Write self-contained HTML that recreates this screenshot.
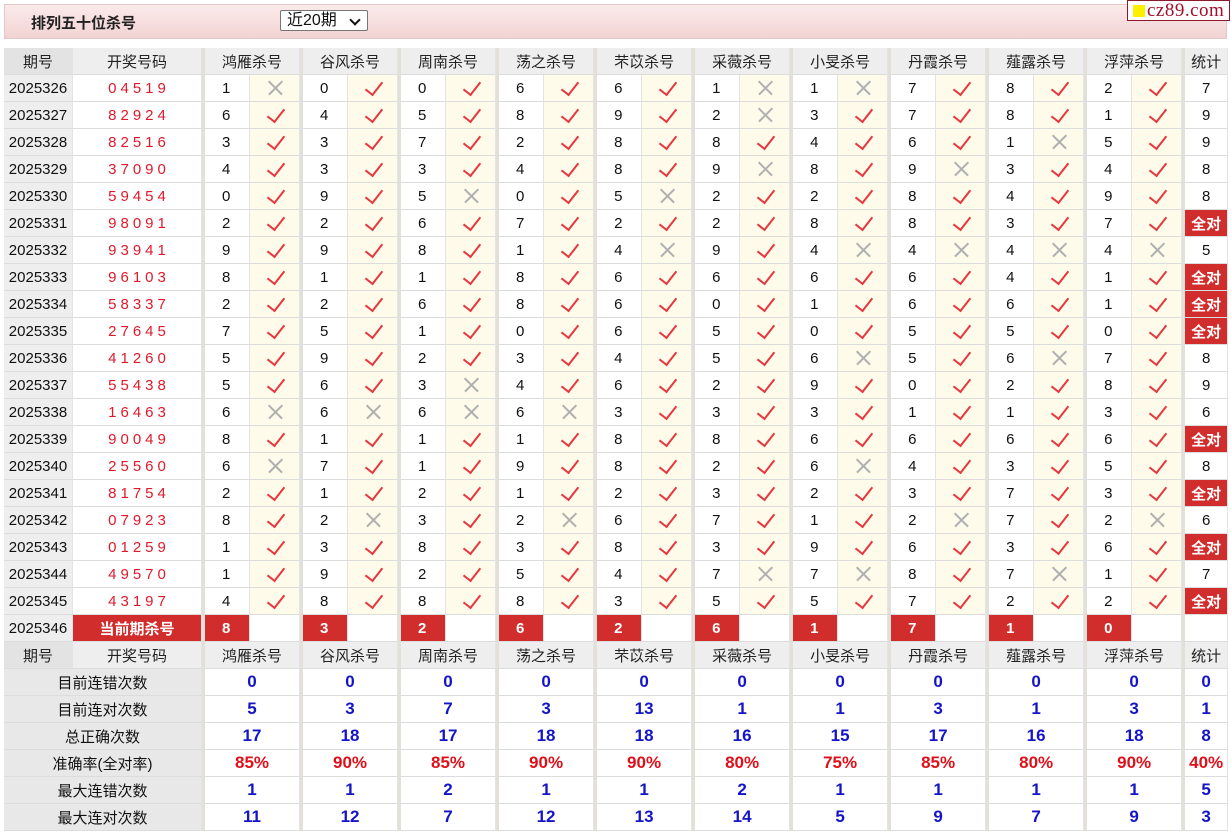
<!DOCTYPE html>
<html><head><meta charset="utf-8"><style>
body{margin:0;background:#fff;font-family:"Liberation Sans","Noto Sans CJK SC",sans-serif;width:1231px;height:833px;overflow:hidden;position:relative}
.top{position:absolute;left:4px;top:4px;width:1223px;height:35px;background:linear-gradient(#fbeaea,#f2d3d3);border:1px solid #e3c8c8;box-sizing:border-box}
.tt{position:absolute;left:26px;top:7px;font-weight:bold;font-size:15px;color:#222}
.sel{position:absolute;left:275px;top:5px;width:88px;height:21px;border:1px solid #767676;border-radius:2px;background:#fff;font-size:16px;line-height:20px;padding-left:6px;box-sizing:border-box;color:#111}
.sel i{position:absolute;right:8px;top:5px;width:6px;height:6px;border-right:2px solid #111;border-bottom:2px solid #111;transform:rotate(45deg)}
.logo{position:absolute;left:1127px;top:0;width:103px;height:21px;background:#fff;border:1px solid #8b1a2a;box-sizing:border-box;font-family:"Liberation Serif",serif;color:#a0102a;font-size:19px;line-height:19px;padding-left:19px;letter-spacing:0.5px}
.logo b{position:absolute;left:5px;top:4px;width:12px;height:12px;background:#ffef00}
table{position:absolute;left:4px;top:48px;border-collapse:separate;border-spacing:0;table-layout:fixed;width:1223px}
td{height:27px;border-bottom:1px solid #dcdcdc;border-right:1px solid #e4e4e4;text-align:center;font-size:15px;padding:0;box-sizing:border-box;color:#111;position:relative;white-space:nowrap;overflow:hidden}
tr.h td{background:#eeeeee;color:#222}
td.q{background:#eeeeee}
tr.h td.q{background:#e3e3e3}
td.k{color:#e0192b;letter-spacing:4px;padding-left:4px}
td.n{border-left:3px solid #e3e0d8;text-align:left;padding-left:17px}
td.g{border-left:3px solid #e3e0d8}
td.m{background:#fffbeb}
td.v::after{content:"";position:absolute;left:21px;top:3px;width:8px;height:15px;border-right:2px solid #e5383e;border-bottom:2px solid #e5383e;transform:rotate(38deg)}
td.x::before,td.x::after{content:"";position:absolute;left:16px;top:12px;width:19px;height:1.5px;background:#b0b0b0;transform:rotate(45deg)}
td.x::after{transform:rotate(-45deg)}
td.a{background:#d12d2d;color:#fff;font-weight:bold}
td.r{background:#d12d2d;color:#fff;font-weight:bold}
td.c{background:#fff}
td.l{background:#e8e8e8}
td.b{color:#1515c8;font-weight:bold;font-size:17px}
td.p{color:#e0101a;font-weight:bold;font-size:17px}
td.s{border-left:3px solid #e3e0d8}
</style></head><body>
<div class="top"><div class="tt">排列五十位杀号</div><div class="sel">近20期<i></i></div></div>
<div class="logo"><b></b>cz89.com</div>
<table>
<colgroup><col style="width:69px"><col style="width:129px"><col style="width:48px"><col style="width:50px"><col style="width:48px"><col style="width:50px"><col style="width:48px"><col style="width:50px"><col style="width:48px"><col style="width:50px"><col style="width:48px"><col style="width:50px"><col style="width:48px"><col style="width:50px"><col style="width:48px"><col style="width:50px"><col style="width:48px"><col style="width:50px"><col style="width:48px"><col style="width:50px"><col style="width:48px"><col style="width:50px"><col style="width:46px"></colgroup>
<tr class="h"><td class="q">期号</td><td>开奖号码</td><td class="g" colspan="2">鸿雁杀号</td><td class="g" colspan="2">谷风杀号</td><td class="g" colspan="2">周南杀号</td><td class="g" colspan="2">荡之杀号</td><td class="g" colspan="2">芣苡杀号</td><td class="g" colspan="2">采薇杀号</td><td class="g" colspan="2">小旻杀号</td><td class="g" colspan="2">丹霞杀号</td><td class="g" colspan="2">薤露杀号</td><td class="g" colspan="2">浮萍杀号</td><td class="g">统计</td></tr>
<tr><td class="q">2025326</td><td class="k">04519</td><td class="n">1</td><td class="m x"></td><td class="n">0</td><td class="m v"></td><td class="n">0</td><td class="m v"></td><td class="n">6</td><td class="m v"></td><td class="n">6</td><td class="m v"></td><td class="n">1</td><td class="m x"></td><td class="n">1</td><td class="m x"></td><td class="n">7</td><td class="m v"></td><td class="n">8</td><td class="m v"></td><td class="n">2</td><td class="m v"></td><td class="s">7</td></tr>
<tr><td class="q">2025327</td><td class="k">82924</td><td class="n">6</td><td class="m v"></td><td class="n">4</td><td class="m v"></td><td class="n">5</td><td class="m v"></td><td class="n">8</td><td class="m v"></td><td class="n">9</td><td class="m v"></td><td class="n">2</td><td class="m x"></td><td class="n">3</td><td class="m v"></td><td class="n">7</td><td class="m v"></td><td class="n">8</td><td class="m v"></td><td class="n">1</td><td class="m v"></td><td class="s">9</td></tr>
<tr><td class="q">2025328</td><td class="k">82516</td><td class="n">3</td><td class="m v"></td><td class="n">3</td><td class="m v"></td><td class="n">7</td><td class="m v"></td><td class="n">2</td><td class="m v"></td><td class="n">8</td><td class="m v"></td><td class="n">8</td><td class="m v"></td><td class="n">4</td><td class="m v"></td><td class="n">6</td><td class="m v"></td><td class="n">1</td><td class="m x"></td><td class="n">5</td><td class="m v"></td><td class="s">9</td></tr>
<tr><td class="q">2025329</td><td class="k">37090</td><td class="n">4</td><td class="m v"></td><td class="n">3</td><td class="m v"></td><td class="n">3</td><td class="m v"></td><td class="n">4</td><td class="m v"></td><td class="n">8</td><td class="m v"></td><td class="n">9</td><td class="m x"></td><td class="n">8</td><td class="m v"></td><td class="n">9</td><td class="m x"></td><td class="n">3</td><td class="m v"></td><td class="n">4</td><td class="m v"></td><td class="s">8</td></tr>
<tr><td class="q">2025330</td><td class="k">59454</td><td class="n">0</td><td class="m v"></td><td class="n">9</td><td class="m v"></td><td class="n">5</td><td class="m x"></td><td class="n">0</td><td class="m v"></td><td class="n">5</td><td class="m x"></td><td class="n">2</td><td class="m v"></td><td class="n">2</td><td class="m v"></td><td class="n">8</td><td class="m v"></td><td class="n">4</td><td class="m v"></td><td class="n">9</td><td class="m v"></td><td class="s">8</td></tr>
<tr><td class="q">2025331</td><td class="k">98091</td><td class="n">2</td><td class="m v"></td><td class="n">2</td><td class="m v"></td><td class="n">6</td><td class="m v"></td><td class="n">7</td><td class="m v"></td><td class="n">2</td><td class="m v"></td><td class="n">2</td><td class="m v"></td><td class="n">8</td><td class="m v"></td><td class="n">8</td><td class="m v"></td><td class="n">3</td><td class="m v"></td><td class="n">7</td><td class="m v"></td><td class="s a">全对</td></tr>
<tr><td class="q">2025332</td><td class="k">93941</td><td class="n">9</td><td class="m v"></td><td class="n">9</td><td class="m v"></td><td class="n">8</td><td class="m v"></td><td class="n">1</td><td class="m v"></td><td class="n">4</td><td class="m x"></td><td class="n">9</td><td class="m v"></td><td class="n">4</td><td class="m x"></td><td class="n">4</td><td class="m x"></td><td class="n">4</td><td class="m x"></td><td class="n">4</td><td class="m x"></td><td class="s">5</td></tr>
<tr><td class="q">2025333</td><td class="k">96103</td><td class="n">8</td><td class="m v"></td><td class="n">1</td><td class="m v"></td><td class="n">1</td><td class="m v"></td><td class="n">8</td><td class="m v"></td><td class="n">6</td><td class="m v"></td><td class="n">6</td><td class="m v"></td><td class="n">6</td><td class="m v"></td><td class="n">6</td><td class="m v"></td><td class="n">4</td><td class="m v"></td><td class="n">1</td><td class="m v"></td><td class="s a">全对</td></tr>
<tr><td class="q">2025334</td><td class="k">58337</td><td class="n">2</td><td class="m v"></td><td class="n">2</td><td class="m v"></td><td class="n">6</td><td class="m v"></td><td class="n">8</td><td class="m v"></td><td class="n">6</td><td class="m v"></td><td class="n">0</td><td class="m v"></td><td class="n">1</td><td class="m v"></td><td class="n">6</td><td class="m v"></td><td class="n">6</td><td class="m v"></td><td class="n">1</td><td class="m v"></td><td class="s a">全对</td></tr>
<tr><td class="q">2025335</td><td class="k">27645</td><td class="n">7</td><td class="m v"></td><td class="n">5</td><td class="m v"></td><td class="n">1</td><td class="m v"></td><td class="n">0</td><td class="m v"></td><td class="n">6</td><td class="m v"></td><td class="n">5</td><td class="m v"></td><td class="n">0</td><td class="m v"></td><td class="n">5</td><td class="m v"></td><td class="n">5</td><td class="m v"></td><td class="n">0</td><td class="m v"></td><td class="s a">全对</td></tr>
<tr><td class="q">2025336</td><td class="k">41260</td><td class="n">5</td><td class="m v"></td><td class="n">9</td><td class="m v"></td><td class="n">2</td><td class="m v"></td><td class="n">3</td><td class="m v"></td><td class="n">4</td><td class="m v"></td><td class="n">5</td><td class="m v"></td><td class="n">6</td><td class="m x"></td><td class="n">5</td><td class="m v"></td><td class="n">6</td><td class="m x"></td><td class="n">7</td><td class="m v"></td><td class="s">8</td></tr>
<tr><td class="q">2025337</td><td class="k">55438</td><td class="n">5</td><td class="m v"></td><td class="n">6</td><td class="m v"></td><td class="n">3</td><td class="m x"></td><td class="n">4</td><td class="m v"></td><td class="n">6</td><td class="m v"></td><td class="n">2</td><td class="m v"></td><td class="n">9</td><td class="m v"></td><td class="n">0</td><td class="m v"></td><td class="n">2</td><td class="m v"></td><td class="n">8</td><td class="m v"></td><td class="s">9</td></tr>
<tr><td class="q">2025338</td><td class="k">16463</td><td class="n">6</td><td class="m x"></td><td class="n">6</td><td class="m x"></td><td class="n">6</td><td class="m x"></td><td class="n">6</td><td class="m x"></td><td class="n">3</td><td class="m v"></td><td class="n">3</td><td class="m v"></td><td class="n">3</td><td class="m v"></td><td class="n">1</td><td class="m v"></td><td class="n">1</td><td class="m v"></td><td class="n">3</td><td class="m v"></td><td class="s">6</td></tr>
<tr><td class="q">2025339</td><td class="k">90049</td><td class="n">8</td><td class="m v"></td><td class="n">1</td><td class="m v"></td><td class="n">1</td><td class="m v"></td><td class="n">1</td><td class="m v"></td><td class="n">8</td><td class="m v"></td><td class="n">8</td><td class="m v"></td><td class="n">6</td><td class="m v"></td><td class="n">6</td><td class="m v"></td><td class="n">6</td><td class="m v"></td><td class="n">6</td><td class="m v"></td><td class="s a">全对</td></tr>
<tr><td class="q">2025340</td><td class="k">25560</td><td class="n">6</td><td class="m x"></td><td class="n">7</td><td class="m v"></td><td class="n">1</td><td class="m v"></td><td class="n">9</td><td class="m v"></td><td class="n">8</td><td class="m v"></td><td class="n">2</td><td class="m v"></td><td class="n">6</td><td class="m x"></td><td class="n">4</td><td class="m v"></td><td class="n">3</td><td class="m v"></td><td class="n">5</td><td class="m v"></td><td class="s">8</td></tr>
<tr><td class="q">2025341</td><td class="k">81754</td><td class="n">2</td><td class="m v"></td><td class="n">1</td><td class="m v"></td><td class="n">2</td><td class="m v"></td><td class="n">1</td><td class="m v"></td><td class="n">2</td><td class="m v"></td><td class="n">3</td><td class="m v"></td><td class="n">2</td><td class="m v"></td><td class="n">3</td><td class="m v"></td><td class="n">7</td><td class="m v"></td><td class="n">3</td><td class="m v"></td><td class="s a">全对</td></tr>
<tr><td class="q">2025342</td><td class="k">07923</td><td class="n">8</td><td class="m v"></td><td class="n">2</td><td class="m x"></td><td class="n">3</td><td class="m v"></td><td class="n">2</td><td class="m x"></td><td class="n">6</td><td class="m v"></td><td class="n">7</td><td class="m v"></td><td class="n">1</td><td class="m v"></td><td class="n">2</td><td class="m x"></td><td class="n">7</td><td class="m v"></td><td class="n">2</td><td class="m x"></td><td class="s">6</td></tr>
<tr><td class="q">2025343</td><td class="k">01259</td><td class="n">1</td><td class="m v"></td><td class="n">3</td><td class="m v"></td><td class="n">8</td><td class="m v"></td><td class="n">3</td><td class="m v"></td><td class="n">8</td><td class="m v"></td><td class="n">3</td><td class="m v"></td><td class="n">9</td><td class="m v"></td><td class="n">6</td><td class="m v"></td><td class="n">3</td><td class="m v"></td><td class="n">6</td><td class="m v"></td><td class="s a">全对</td></tr>
<tr><td class="q">2025344</td><td class="k">49570</td><td class="n">1</td><td class="m v"></td><td class="n">9</td><td class="m v"></td><td class="n">2</td><td class="m v"></td><td class="n">5</td><td class="m v"></td><td class="n">4</td><td class="m v"></td><td class="n">7</td><td class="m x"></td><td class="n">7</td><td class="m x"></td><td class="n">8</td><td class="m v"></td><td class="n">7</td><td class="m x"></td><td class="n">1</td><td class="m v"></td><td class="s">7</td></tr>
<tr><td class="q">2025345</td><td class="k">43197</td><td class="n">4</td><td class="m v"></td><td class="n">8</td><td class="m v"></td><td class="n">8</td><td class="m v"></td><td class="n">8</td><td class="m v"></td><td class="n">3</td><td class="m v"></td><td class="n">5</td><td class="m v"></td><td class="n">5</td><td class="m v"></td><td class="n">7</td><td class="m v"></td><td class="n">2</td><td class="m v"></td><td class="n">2</td><td class="m v"></td><td class="s a">全对</td></tr>
<tr><td class="q">2025346</td><td class="r">当前期杀号</td><td class="n r">8</td><td class="c"></td><td class="n r">3</td><td class="c"></td><td class="n r">2</td><td class="c"></td><td class="n r">6</td><td class="c"></td><td class="n r">2</td><td class="c"></td><td class="n r">6</td><td class="c"></td><td class="n r">1</td><td class="c"></td><td class="n r">7</td><td class="c"></td><td class="n r">1</td><td class="c"></td><td class="n r">0</td><td class="c"></td><td class="s"></td></tr>
<tr class="h"><td class="q">期号</td><td>开奖号码</td><td class="g" colspan="2">鸿雁杀号</td><td class="g" colspan="2">谷风杀号</td><td class="g" colspan="2">周南杀号</td><td class="g" colspan="2">荡之杀号</td><td class="g" colspan="2">芣苡杀号</td><td class="g" colspan="2">采薇杀号</td><td class="g" colspan="2">小旻杀号</td><td class="g" colspan="2">丹霞杀号</td><td class="g" colspan="2">薤露杀号</td><td class="g" colspan="2">浮萍杀号</td><td class="g">统计</td></tr>
<tr><td class="l" colspan="2">目前连错次数</td><td class="g b" colspan="2">0</td><td class="g b" colspan="2">0</td><td class="g b" colspan="2">0</td><td class="g b" colspan="2">0</td><td class="g b" colspan="2">0</td><td class="g b" colspan="2">0</td><td class="g b" colspan="2">0</td><td class="g b" colspan="2">0</td><td class="g b" colspan="2">0</td><td class="g b" colspan="2">0</td><td class="g b">0</td></tr>
<tr><td class="l" colspan="2">目前连对次数</td><td class="g b" colspan="2">5</td><td class="g b" colspan="2">3</td><td class="g b" colspan="2">7</td><td class="g b" colspan="2">3</td><td class="g b" colspan="2">13</td><td class="g b" colspan="2">1</td><td class="g b" colspan="2">1</td><td class="g b" colspan="2">3</td><td class="g b" colspan="2">1</td><td class="g b" colspan="2">3</td><td class="g b">1</td></tr>
<tr><td class="l" colspan="2">总正确次数</td><td class="g b" colspan="2">17</td><td class="g b" colspan="2">18</td><td class="g b" colspan="2">17</td><td class="g b" colspan="2">18</td><td class="g b" colspan="2">18</td><td class="g b" colspan="2">16</td><td class="g b" colspan="2">15</td><td class="g b" colspan="2">17</td><td class="g b" colspan="2">16</td><td class="g b" colspan="2">18</td><td class="g b">8</td></tr>
<tr><td class="l" colspan="2">准确率(全对率)</td><td class="g p" colspan="2">85%</td><td class="g p" colspan="2">90%</td><td class="g p" colspan="2">85%</td><td class="g p" colspan="2">90%</td><td class="g p" colspan="2">90%</td><td class="g p" colspan="2">80%</td><td class="g p" colspan="2">75%</td><td class="g p" colspan="2">85%</td><td class="g p" colspan="2">80%</td><td class="g p" colspan="2">90%</td><td class="g p">40%</td></tr>
<tr><td class="l" colspan="2">最大连错次数</td><td class="g b" colspan="2">1</td><td class="g b" colspan="2">1</td><td class="g b" colspan="2">2</td><td class="g b" colspan="2">1</td><td class="g b" colspan="2">1</td><td class="g b" colspan="2">2</td><td class="g b" colspan="2">1</td><td class="g b" colspan="2">1</td><td class="g b" colspan="2">1</td><td class="g b" colspan="2">1</td><td class="g b">5</td></tr>
<tr><td class="l" colspan="2">最大连对次数</td><td class="g b" colspan="2">11</td><td class="g b" colspan="2">12</td><td class="g b" colspan="2">7</td><td class="g b" colspan="2">12</td><td class="g b" colspan="2">13</td><td class="g b" colspan="2">14</td><td class="g b" colspan="2">5</td><td class="g b" colspan="2">9</td><td class="g b" colspan="2">7</td><td class="g b" colspan="2">9</td><td class="g b">3</td></tr>
</table>
</body></html>
